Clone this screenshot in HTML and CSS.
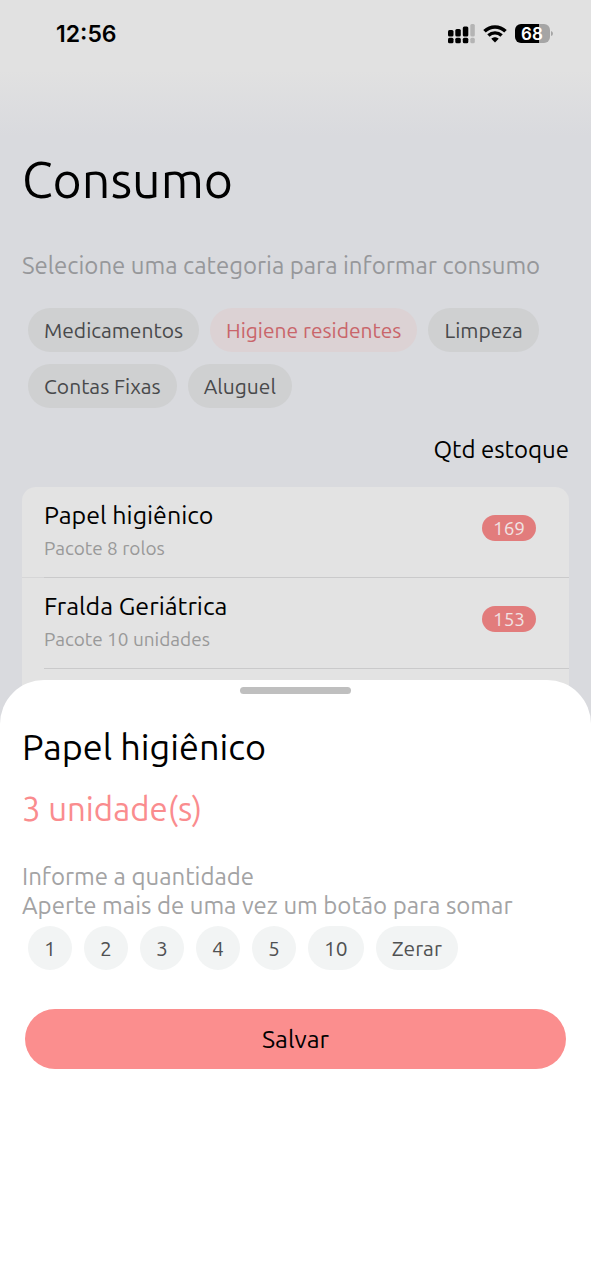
FILE: index.html
```html
<!DOCTYPE html>
<html lang="pt-BR">
<head>
<meta charset="utf-8">
<meta name="viewport" content="width=device-width, initial-scale=1">
<title>Consumo</title>
<link rel="stylesheet" href="styles.css">
</head>
<body>
<div class="screen">
  <header class="status">
    <time class="clock">12:56</time>
    <div class="indicators">
      <svg class="signal" viewBox="0 0 27 20" width="27" height="20" aria-hidden="true">
        <g fill="#000">
          <rect x="0" y="6" width="5.500" height="6.500" rx="1.500"/><rect x="7.300" y="5" width="5.500" height="7.500" rx="1.500"/><rect x="14.800" y="2.500" width="5.500" height="10" rx="1.500"/>
          <rect x="0" y="13.700" width="5.500" height="5.500" rx="1.500"/><rect x="7.300" y="13.700" width="5.500" height="5.500" rx="1.500"/><rect x="14.800" y="13.700" width="5.500" height="5.500" rx="1.500"/>
        </g>
        <g fill="#b4b4b4"><rect x="22.300" y="0" width="4.500" height="12.500" rx="1.500"/><rect x="22.300" y="13.700" width="4.500" height="5.500" rx="1.500"/></g>
      </svg>
      <svg class="wifi" viewBox="0 0 24 18" width="24" height="18" aria-hidden="true">
        <path d="M1.500 6.300C7.500 .5 16.500 .5 22.500 6.300" fill="none" stroke="#000" stroke-width="3.600"/>
        <path d="M5.400 10.600C9.200 7 14.800 7 18.600 10.600" fill="none" stroke="#000" stroke-width="3.400"/>
        <path d="M8.300 13.700C10.400 11.700 13.600 11.700 15.700 13.700L12 17.400Z" fill="#000"/>
      </svg>
      <svg class="battery" viewBox="0 0 38 20" width="38" height="20" role="img" aria-label="Bateria 68%">
        <path d="M6 0H24V19H6A6 6 0 0 1 0 13V6A6 6 0 0 1 6 0Z" fill="#000"/>
        <path d="M24 0H29A6 6 0 0 1 35 6V13A6 6 0 0 1 29 19H24Z" fill="#a5a5a5"/>
        <path d="M36 7Q38 7.500 38 9.500T36 12Z" fill="#a5a5a5"/>
        <text class="battery-text" x="17" y="16" text-anchor="middle">68</text>
      </svg>
    </div>
  </header>

  <main class="page">
    <h1 class="title">Consumo</h1>
    <p class="hint">Selecione uma categoria para informar consumo</p>
    <div class="chips">
      <button class="chip" type="button">Medicamentos</button>
      <button class="chip chip-active" type="button">Higiene residentes</button>
      <button class="chip" type="button">Limpeza</button>
      <button class="chip" type="button">Contas Fixas</button>
      <button class="chip" type="button">Aluguel</button>
    </div>
    <p class="stock-label">Qtd estoque</p>
    <ul class="list">
      <li class="item">
        <div class="item-body">
          <div><h2 class="item-name">Papel higiênico</h2><p class="item-note">Pacote 8 rolos</p></div>
          <span class="badge">169</span>
        </div>
      </li>
      <li class="item">
        <div class="item-body">
          <div><h2 class="item-name">Fralda Geriátrica</h2><p class="item-note">Pacote 10 unidades</p></div>
          <span class="badge">153</span>
        </div>
      </li>
      <li class="item item-rest"></li>
    </ul>
  </main>

  <section class="sheet" role="dialog" aria-labelledby="sheet-title">
    <div class="handle"></div>
    <h2 class="sheet-title" id="sheet-title">Papel higiênico</h2>
    <p class="amount">3 unidade(s)</p>
    <p class="help">Informe a quantidade<br>Aperte mais de uma vez um botão para somar</p>
    <div class="chips">
      <button class="chip chip-light" type="button">1</button>
      <button class="chip chip-light" type="button">2</button>
      <button class="chip chip-light" type="button">3</button>
      <button class="chip chip-light" type="button">4</button>
      <button class="chip chip-light" type="button">5</button>
      <button class="chip chip-light" type="button">10</button>
      <button class="chip chip-light" type="button">Zerar</button>
    </div>
    <button class="save" type="button">Salvar</button>
  </section>
</div>
</body>
</html>
```
FILE: styles.css
```css
* { box-sizing: border-box; }

body, h1, h2, p, ul { margin: 0; padding: 0; }
h1, h2 { font-weight: 400; }
button { border: 0; font: inherit; cursor: pointer; }

body {
  font-family: Ubuntu, "Noto Sans", sans-serif;
  color: #000;
  background: #d9dade;
}

.screen {
  position: relative;
  min-height: 100vh;
  overflow: hidden;
  background: linear-gradient(#e1e1e1 0, #e1e1e1 70px, #d9dade 136px);
}

.status {
  display: flex;
  justify-content: space-between;
  align-items: center;
  height: 68px;
  padding: 0 38px 0 56px;
}

.clock {
  font: 600 23px/28px Inter, sans-serif;
}

.indicators { display: flex; align-items: center; gap: 8px; }
.battery-text { font: 600 17px Inter, sans-serif; fill: #fff; }

.page { padding: 79px 22px 0; }
.title { font-size: 50px; line-height: 64px; }

.hint {
  margin-top: 39px;
  font-size: 24px;
  line-height: 32px;
  color: #96979a;
}

.chips {
  display: flex;
  flex-wrap: wrap;
  gap: 12px;
  padding: 0 6px;
}

.page .chips { margin-top: 26px; column-gap: 11px; }

.chip {
  min-width: 44px;
  height: 44px;
  padding: 0 16px;
  border-radius: 22px;
  background: #cfd0d1;
  color: #48494b;
  font-size: 21px;
  line-height: 28px;
}

.chip-active { background: #dcd2d4; color: #c9656a; }
.chip-light { background: #f2f4f4; color: #505152; }

.stock-label {
  margin-top: 26px;
  font-size: 24px;
  line-height: 32px;
  text-align: right;
}

.list {
  margin-top: 21px;
  list-style: none;
  border-radius: 14px 14px 0 0;
  background: #e3e3e3;
}

.item { padding-left: 22px; }
.item:first-child { box-shadow: inset 0 -1px #d6d6d7; }
.item-rest { height: 120px; }

.item-body {
  display: flex;
  justify-content: space-between;
  align-items: center;
  padding: 11px 33px 15px 0;
  border-bottom: 1px solid #cacacb;
}

.item-name { font-size: 25px; line-height: 34px; }

.item-note {
  margin-top: 2px;
  font-size: 19px;
  line-height: 28px;
  color: #999;
}

.badge {
  min-width: 54px;
  padding: 0 10px;
  margin-top: -4px;
  border-radius: 13px;
  background: #e27c7c;
  color: #f0e4e4;
  font-size: 19px;
  line-height: 26px;
  text-align: center;
}

.sheet {
  position: absolute;
  left: 0;
  right: 0;
  bottom: 0;
  padding: 7px 22px 211px;
  border-radius: 44px 44px 0 0;
  background: #fff;
}

.handle {
  width: 111px;
  height: 7px;
  margin: 0 auto;
  border-radius: 4px;
  background: #bfbfbf;
}

.sheet-title { margin-top: 29px; font-size: 36px; line-height: 48px; }

.amount {
  margin-top: 18px;
  font-size: 33px;
  line-height: 40px;
  color: #fa8c8e;
}

.help {
  margin-top: 33px;
  font-size: 24px;
  line-height: 29px;
  color: #a3a3a4;
}

.sheet .chips { margin-top: 6px; }

.save {
  display: block;
  width: calc(100% - 6px);
  height: 60px;
  margin: 39px auto 0;
  border-radius: 30px;
  background: #fb8e8e;
  color: #000;
  font-size: 25px;
}
```
